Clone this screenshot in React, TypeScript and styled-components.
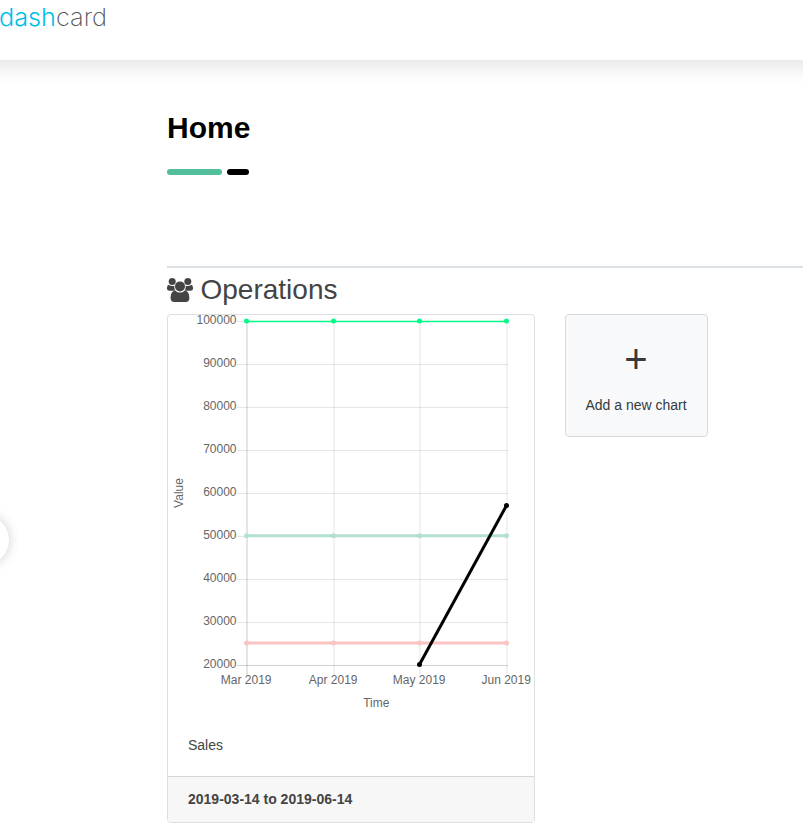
import React from "react";
import styled, { createGlobalStyle } from "styled-components";

const Global = createGlobalStyle`
  * { box-sizing: border-box; }
  body { margin: 0; background: #fff; color: #444; font: 14px/21px "Liberation Sans", Arial, sans-serif; overflow: hidden; }
`;
const Page = styled.div`
  position: relative;
  height: 833px;
  overflow: hidden;
`;
const Header = styled.header`
  height: 60px;
  margin: 0 -40px;
  padding-left: 40px;
  box-shadow: 0 2px 25px rgba(0, 0, 0, 0.15);
`;
const Logo = styled.svg`
  display: block;
  width: 120px;
  height: 36px;
  font-family: Inter, sans-serif;
  font-size: 24.5px;
`;
const Main = styled.main`
  padding: 50px 0 0 167px;
`;
const Title = styled.h1`
  margin: 0;
  font-size: 30px;
  line-height: 36px;
  color: #000;
`;
const Accent = styled.div`
  display: flex;
  gap: 5px;
  margin-top: 23px;
`;
const Dash = styled.span<{ $w: number; $color: string }>`
  width: ${(p) => p.$w}px;
  height: 6px;
  border-radius: 3px;
  background: ${(p) => p.$color};
`;
const Section = styled.section`
  margin-top: 91px;
  border-top: 2px solid #dce1e6;
`;
const SectionTitle = styled.h2`
  display: flex;
  align-items: center;
  gap: 7.5px;
  margin: 5px 0 8px;
  height: 33px;
  font-size: 28px;
  line-height: 33px;
  font-weight: 400;
`;
const GroupIcon = styled.svg`
  width: 26px;
  height: 24px;
  fill: #444;
`;
const Cards = styled.div`
  display: flex;
  align-items: flex-start;
  gap: 30px;
`;
const Card = styled.article`
  width: 368px;
  height: 509px;
  border: 1px solid #dfdfdf;
  border-radius: 4px;
  overflow: hidden;
  background: #fff;
`;
const Chart = styled.svg`
  display: block;
  width: 366px;
  height: 400px;
  font-size: 12px;
  fill: #666;
`;
const CardBody = styled.div`
  height: 61px;
  padding: 20px 20px;
`;
const CardFooter = styled.footer`
  height: 47px;
  padding: 12px 20px;
  border-top: 1px solid #d5d5d5;
  background: #f7f7f7;
  font-weight: 700;
`;
const AddCard = styled.button`
  display: flex;
  flex-direction: column;
  align-items: center;
  width: 143px;
  height: 123px;
  padding: 20px 1px 0 0;
  border: 1px solid #d8d9da;
  border-radius: 4px;
  background: #f8f9fb;
  color: #343a40;
  font: inherit;
`;
const Plus = styled.span`
  font-size: 40px;
  line-height: 48px;
  margin-bottom: 12px;
`;
const Handle = styled.div`
  position: absolute;
  left: -41px;
  top: 515px;
  width: 50px;
  height: 50px;
  border-radius: 50%;
  background: #fff;
  box-shadow: 0 0 12px rgba(0, 0, 0, 0.2);
`;

const ticks = [100000, 90000, 80000, 70000, 60000, 50000, 40000, 30000, 20000];
const months = ["Mar 2019", "Apr 2019", "May 2019", "Jun 2019"];
const xs = [78.5, 165.5, 251.5, 338.5];
const yFor = (v: number) => 349.5 - ((v - 20000) / 80000) * 343.5;
const series = [
  { value: 100000, color: "#00fa87", width: 1.5, offset: 0.6 },
  { value: 50000, color: "#b3e1cd", width: 3, offset: 0 },
  { value: 25000, color: "#f9c4c1", width: 3, offset: 0 },
];

function SalesChart() {
  return (
    <Chart viewBox="0 0 366 400">
      {ticks.map((t, i) => {
        const y = Math.round(6 + i * 42.94) + 0.5;
        return (
          <g key={t}>
            <line x1="69" x2="340" y1={y} y2={y} stroke="#000" strokeOpacity={i === 8 ? 0.18 : 0.1} />
            <text x="68.5" y={y + 2.5} textAnchor="end">{t}</text>
          </g>
        );
      })}
      {xs.map((x, i) => (
        <g key={x}>
          <line x1={x + 0.5} x2={x + 0.5} y1="6" y2="360" stroke="#000" strokeWidth="2" strokeOpacity={i === 0 ? 0.1 : 0.05} />
          <text x={x - 0.3} y="369" textAnchor="middle">{months[i]}</text>
        </g>
      ))}
      <text x="208.3" y="392" textAnchor="middle">Time</text>
      <text transform="translate(15 178) rotate(-90)" textAnchor="middle">Value</text>
      {series.map((s) => {
        const y = yFor(s.value);
        return (
          <g key={s.value} fill={s.color}>
            <line x1="78.5" x2="338.5" y1={y + s.offset} y2={y + s.offset} stroke={s.color} strokeWidth={s.width} />
            {xs.map((x) => <circle key={x} cx={x} cy={y} r="2.5" />)}
          </g>
        );
      })}
      <g fill="#000">
        <line x1="251.5" y1="349.5" x2="338.5" y2="190.5" stroke="#000" strokeWidth="3" />
        <circle cx="251.5" cy="349.5" r="2.5" />
        <circle cx="338.5" cy="190.5" r="2.5" />
      </g>
    </Chart>
  );
}

export default function App() {
  return (
    <Page>
      <Global />
      <Header>
        <Logo viewBox="0 0 120 36">
          <text x="-1" y="25.5" fill="#00bfe9" fontWeight="300" textLength="57" lengthAdjust="spacingAndGlyphs">dash</text>
          <text x="56" y="25.5" fill="#555" fontWeight="200" textLength="51" lengthAdjust="spacingAndGlyphs">card</text>
        </Logo>
      </Header>
      <Main>
        <Title>Home</Title>
        <Accent>
          <Dash $w={55} $color="#52be9b" />
          <Dash $w={22} $color="#000" />
        </Accent>
        <Section>
          <SectionTitle>
            <GroupIcon viewBox="0 0 26 24">
              <circle cx="5.2" cy="3.6" r="3.5" />
              <circle cx="20.8" cy="3.6" r="3.5" />
              <path d="M1.7 7C3.8 8.2 6 8.2 7.4 7.7C7.1 9.7 7.5 11.3 8.5 12.7H2.4C.8 12.7 0 12 0 10.6C0 8.6.4 7 1.7 7Z" />
              <path d="M24.3 7C22.2 8.2 20 8.2 18.6 7.7C18.9 9.7 18.5 11.3 17.5 12.7H23.6C25.2 12.7 26 12 26 10.6C26 8.6 25.6 7 24.3 7Z" />
              <circle cx="13" cy="8.4" r="5" />
              <path d="M8.3 12.7C11.3 15.2 14.7 15.2 17.7 12.7C20.9 12.7 22.4 15.8 22.4 20.2C22.4 22.6 21 24 18.8 24H7.2C5 24 3.6 22.6 3.6 20.2C3.6 15.8 5.1 12.7 8.3 12.7Z" />
            </GroupIcon>
            Operations
          </SectionTitle>
          <Cards>
            <Card>
              <SalesChart />
              <CardBody>Sales</CardBody>
              <CardFooter>2019-03-14 to 2019-06-14</CardFooter>
            </Card>
            <AddCard>
              <Plus>+</Plus>
              <span>Add a new chart</span>
            </AddCard>
          </Cards>
        </Section>
      </Main>
      <Handle />
    </Page>
  );
}
